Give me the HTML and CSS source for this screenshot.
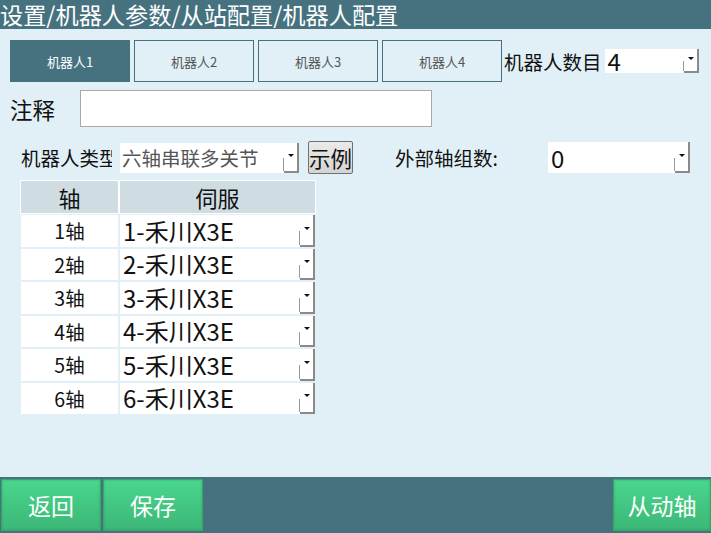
FILE: index.html
```html
<!DOCTYPE html>
<html>
<head>
	<meta charset="utf-8">
	<title>机器人配置</title>
	<link rel="stylesheet" href="styles.css">
</head>
<body>

	<div class="titlebar">设置/机器人参数/从站配置/机器人配置</div>

	<div class="main">
		<div class="tab-row">
			<div class="tab active">机器人1</div>
			<div class="tab">机器人2</div>
			<div class="tab">机器人3</div>
			<div class="tab">机器人4</div>
			<span class="count-label">机器人数目</span>
			<div class="combo count-combo">
				<span class="combo-text">4</span>
				<span class="drop"></span>
			</div>
		</div>

		<div class="note-row">
			<span class="note-label">注释</span>
			<div class="note-input"></div>
		</div>

		<div class="type-row">
			<span class="type-label">机器人类型</span>
			<div class="combo type-combo">
				<span class="combo-text">六轴串联多关节</span>
				<span class="drop"></span>
			</div>
			<button class="example-btn">示例</button>
			<span class="ext-label">外部轴组数:</span>
			<div class="combo ext-combo">
				<span class="combo-text">0</span>
				<span class="drop"></span>
			</div>
		</div>

		<div class="axis-table">
			<div class="head">轴</div>
			<div class="head">伺服</div>

			<div class="axis">1轴</div>
			<div class="combo servo"><span class="combo-text">1-禾川X3E</span><span class="drop"></span></div>
			<div class="axis">2轴</div>
			<div class="combo servo"><span class="combo-text">2-禾川X3E</span><span class="drop"></span></div>
			<div class="axis">3轴</div>
			<div class="combo servo"><span class="combo-text">3-禾川X3E</span><span class="drop"></span></div>
			<div class="axis">4轴</div>
			<div class="combo servo"><span class="combo-text">4-禾川X3E</span><span class="drop"></span></div>
			<div class="axis">5轴</div>
			<div class="combo servo"><span class="combo-text">5-禾川X3E</span><span class="drop"></span></div>
			<div class="axis">6轴</div>
			<div class="combo servo"><span class="combo-text">6-禾川X3E</span><span class="drop"></span></div>
		</div>
	</div>

	<div class="footer">
		<button class="green-btn">返回</button>
		<button class="green-btn">保存</button>
		<span class="spacer"></span>
		<button class="green-btn slave-btn">从动轴</button>
	</div>

</body>
</html>
```

FILE: styles.css
```css
* {
	box-sizing: border-box;
}
html, body {
	margin: 0;
	padding: 0;
}
body {
	width: 711px;
	height: 533px;
	overflow: hidden;
	background: #e1f0f6;
	font-family: "Noto Sans CJK SC", "Noto Sans", sans-serif;
	color: #111;
}
.titlebar {
	height: 29px;
	background: #46727f;
	color: #fff;
	font-size: 23.2px;
	line-height: 28px;
	white-space: nowrap;
}
.main {
	height: 448px;
	padding: 11px 0 0 10px;
}

/* tabs */
.tab-row {
	display: flex;
	align-items: center;
	gap: 4px;
}
.tab {
	width: 120px;
	height: 42px;
	border: solid 1px #46727f;
	color: #555;
	font-size: 13px;
	display: flex;
	align-items: center;
	justify-content: center;
}
.tab.active {
	background: #46727f;
	color: #fff;
}
.count-label {
	font-size: 19.5px;
	margin-left: -2px;
}
.count-combo {
	width: 94px;
	height: 24px;
	margin-left: -1px;
	font-size: 24px;
}

/* combo box */
.combo {
	display: flex;
	background: #fff;
}
.combo-text {
	flex: 1;
	padding-left: 3px;
	display: flex;
	align-items: center;
	white-space: nowrap;
	line-height: 1;
}
.drop {
	position: relative;
	width: 15px;
	border-right: solid 2px #8a8a8a;
	border-bottom: solid 2px #8a8a8a;
	background: #fff;
}
.drop::before {
	content: "";
	position: absolute;
	left: -1px;
	bottom: 0;
	height: 45%;
	border-left: solid 1px #9a9a9a;
}
.drop::after {
	content: "";
	position: absolute;
	left: 4px;
	top: 50%;
	margin-top: -3px;
	border-left: 3px solid transparent;
	border-right: 3px solid transparent;
	border-top: 3px solid #111;
}

/* note */
.note-row {
	display: flex;
	align-items: center;
	margin-top: 8px;
}
.note-label {
	width: 70px;
	font-size: 22.5px;
}
.note-input {
	width: 352px;
	height: 37px;
	background: #fff;
	border: solid 1px #a9a9a9;
}

/* robot type */
.type-row {
	display: flex;
	align-items: center;
	margin-top: 14px;
	padding-left: 11px;
}
.type-label {
	width: 91px;
	overflow: hidden;
	white-space: nowrap;
	font-size: 19.5px;
	margin-right: 8px;
}
.type-combo {
	width: 179px;
	height: 30px;
	font-size: 19.5px;
	color: #555;
}
.type-combo .combo-text {
	padding-left: 2px;
}
.example-btn {
	width: 45px;
	height: 33px;
	margin-left: 9px;
	padding: 0;
	font-family: inherit;
	font-size: 21.5px;
	color: #111;
	white-space: nowrap;
	background: linear-gradient(#eaeaea, #d4d4d4);
	border: solid 1px #707070;
	border-radius: 2px;
	line-height: 1;
}
.ext-label {
	width: 153px;
	margin-left: 42px;
	font-size: 19.5px;
	white-space: nowrap;
}
.ext-combo {
	width: 142px;
	height: 31px;
	font-size: 24px;
}

/* axis table */
.axis-table {
	display: grid;
	grid-template-columns: 97px 195px;
	grid-template-rows: 32px repeat(6, 31.5px);
	gap: 2px;
	width: 294px;
	margin: 7px 0 0 11px;
}
.head {
	background: #cfdde3;
	box-shadow: 0 0 0 1px #fff;
	font-size: 22px;
	line-height: 1.2;
	display: flex;
	align-items: center;
	justify-content: center;
}
.axis {
	background: #fff;
	font-size: 19.5px;
	line-height: 1.2;
	display: flex;
	align-items: center;
	justify-content: center;
}
.servo {
	font-size: 24px;
}
.servo .combo-text {
	padding-left: 3px;
}

/* footer */
.footer {
	height: 56px;
	background: #46727f;
	display: flex;
	gap: 2px;
	padding: 2px 0 2px 1px;
}
.spacer {
	flex: 1;
}
.green-btn {
	width: 100px;
	height: 52px;
	padding: 0;
	font-family: inherit;
	font-size: 23px;
	color: #fff;
	border: solid 1px #38a56b;
	background: linear-gradient(#49d68c, #3cb777);
	box-shadow: inset 0 0 2px rgba(0, 90, 40, 0.35);
}
.slave-btn {
	width: 98px;
	margin-left: 8px;
}
```
